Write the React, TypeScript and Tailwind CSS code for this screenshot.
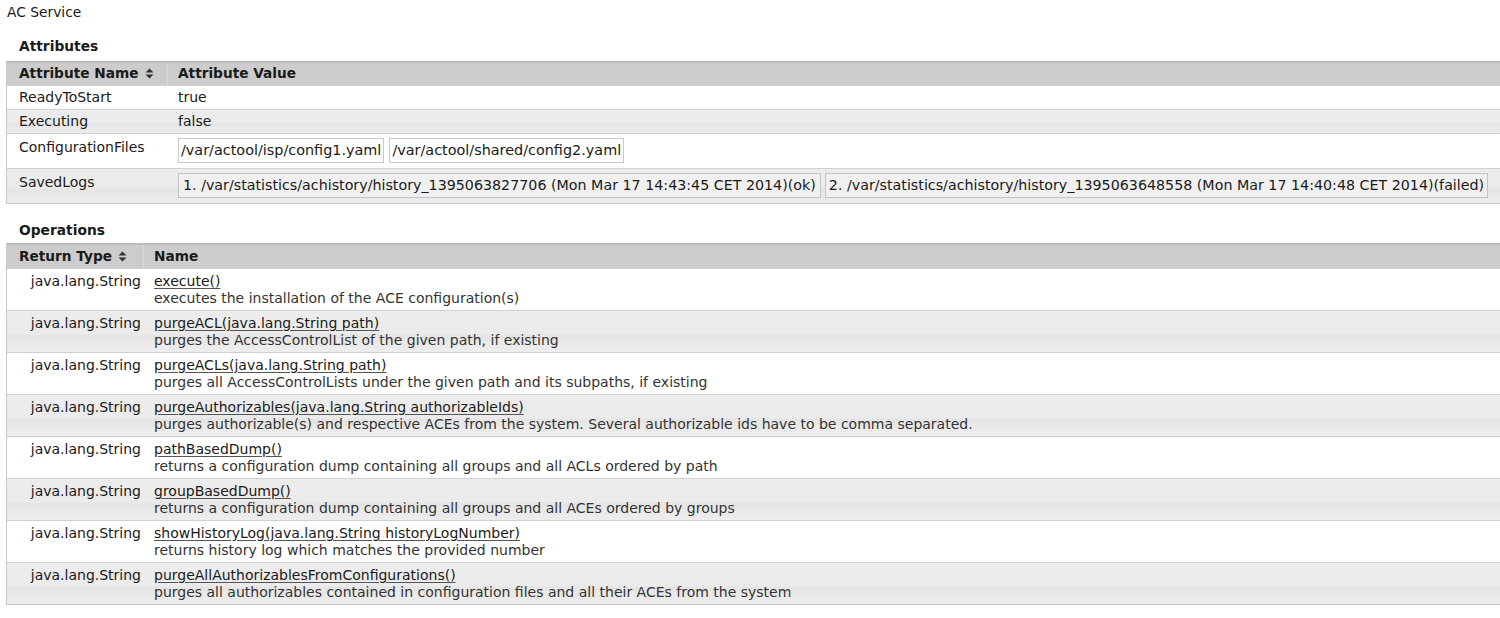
import { ReactNode } from "react";

const font = "font-['Verdana','DejaVu_Sans',sans-serif]";

const SortIcon = () => (
    <svg width="9" height="11" viewBox="0 0 9 11" className="inline-block ml-[6px] -mt-[2px]">
        <path d="M4.5 0.5 L8.5 4.5 L0.5 4.5 Z" fill="#333" />
        <path d="M4.5 10.5 L8.5 6.5 L0.5 6.5 Z" fill="#333" />
    </svg>
);

const rowBg = (i: number) =>
    i % 2 === 0
        ? "bg-white"
        : "bg-[linear-gradient(#ececec_0%,#ebebeb_55%,#e4e4e4_62%,#e9e9e9_75%,#ededed_100%)]";

const attributes: { name: string; value: ReactNode }[] = [
    { name: "ReadyToStart", value: "true" },
    { name: "Executing", value: "false" },
    {
        name: "ConfigurationFiles",
        value: (
            <div className="flex gap-[5px] text-[14.4px]">
                <span className="border border-[#c8c8c8] bg-white px-[2px] h-[25px] leading-[23px]">
                    /var/actool/isp/config1.yaml
                </span>
                <span className="border border-[#c8c8c8] bg-white px-[2px] h-[25px] leading-[23px]">
                    /var/actool/shared/config2.yaml
                </span>
            </div>
        ),
    },
    {
        name: "SavedLogs",
        value: (
            <div className="flex gap-[4px] whitespace-nowrap text-[14.25px]">
                <span className="border border-[#c4c4c4] bg-[#f0f0f0] px-[4px] h-[25px] leading-[23px]">
                    1. /var/statistics/achistory/history_1395063827706 (Mon Mar 17 14:43:45 CET 2014)(ok)
                </span>
                <span className="border border-[#c4c4c4] bg-[#f0f0f0] px-[3px] h-[25px] leading-[23px]">
                    2. /var/statistics/achistory/history_1395063648558 (Mon Mar 17 14:40:48 CET 2014)(failed)
                </span>
            </div>
        ),
    },
];

const operations = [
    ["execute()", "executes the installation of the ACE configuration(s)"],
    ["purgeACL(java.lang.String path)", "purges the AccessControlList of the given path, if existing"],
    ["purgeACLs(java.lang.String path)", "purges all AccessControlLists under the given path and its subpaths, if existing"],
    [
        "purgeAuthorizables(java.lang.String authorizableIds)",
        "purges authorizable(s) and respective ACEs from the system. Several authorizable ids have to be comma separated.",
    ],
    ["pathBasedDump()", "returns a configuration dump containing all groups and all ACLs ordered by path"],
    ["groupBasedDump()", "returns a configuration dump containing all groups and all ACEs ordered by groups"],
    ["showHistoryLog(java.lang.String historyLogNumber)", "returns history log which matches the provided number"],
    ["purgeAllAuthorizablesFromConfigurations()", "purges all authorizables contained in configuration files and all their ACEs from the system"],
];

export default function App() {
    return (
        <div className={`${font} text-[14px] text-[#1a1a1a] bg-white w-[1500px] h-[618px] overflow-hidden`}>
            <div className="pl-[7px] pt-[3px] leading-[18px] text-[13.8px]">AC Service</div>

            <h2 className="pl-[19px] mt-[16px] font-bold leading-[18px] text-[13.8px]">Attributes</h2>
            <div className="ml-[6px] mt-[6px] w-[1520px] border-l border-b border-[#c8c8c8]">
                <div className="flex h-[24px] bg-[#cccccc] border-t-2 border-[#b9b9b9] font-bold leading-[21px] text-[13.7px]">
                    <div className="w-[161px] pl-[12px] border-r border-[#dadada]">
                        Attribute Name
                        <SortIcon />
                    </div>
                    <div className="pl-[10px]">Attribute Value</div>
                </div>
                {attributes.map((a, i) => {
                    const tall = typeof a.value !== "string";
                    return (
                        <div
                            key={a.name}
                            className={`flex border-t border-[#d0d0d0] ${tall ? "h-[35px] pt-[4px]" : "h-[24px] leading-[23px]"} ${rowBg(i)}`}
                        >
                            <div className={`w-[161px] pl-[12px] shrink-0 ${tall ? "leading-[18px]" : ""}`}>{a.name}</div>
                            <div className="pl-[10px]">{a.value}</div>
                        </div>
                    );
                })}
            </div>

            <h2 className="pl-[19px] mt-[17px] font-bold leading-[18px] text-[13.8px]">Operations</h2>
            <div className="ml-[6px] mt-[4px] w-[1520px] border-l border-b border-[#c8c8c8]">
                <div className="flex h-[25px] bg-[#cccccc] border-t-2 border-[#b9b9b9] font-bold leading-[22px] text-[13.7px]">
                    <div className="w-[137px] pl-[12px] border-r border-[#dadada]">
                        Return Type
                        <SortIcon />
                    </div>
                    <div className="pl-[10px]">Name</div>
                </div>
                {operations.map(([name, desc], i) => (
                    <div key={name} className={`flex h-[42px] border-t border-[#d0d0d0] pt-[4px] leading-[17px] ${rowBg(i)}`}>
                        <div className="w-[137px] shrink-0 text-right pr-[3px]">java.lang.String</div>
                        <div className="pl-[10px]">
                            <div>
                                <a href="#" className="underline decoration-[#555] underline-offset-2 text-[#1a1a1a]">
                                    {name}
                                </a>
                            </div>
                            <div className="text-[#333]">{desc}</div>
                        </div>
                    </div>
                ))}
            </div>
        </div>
    );
}
